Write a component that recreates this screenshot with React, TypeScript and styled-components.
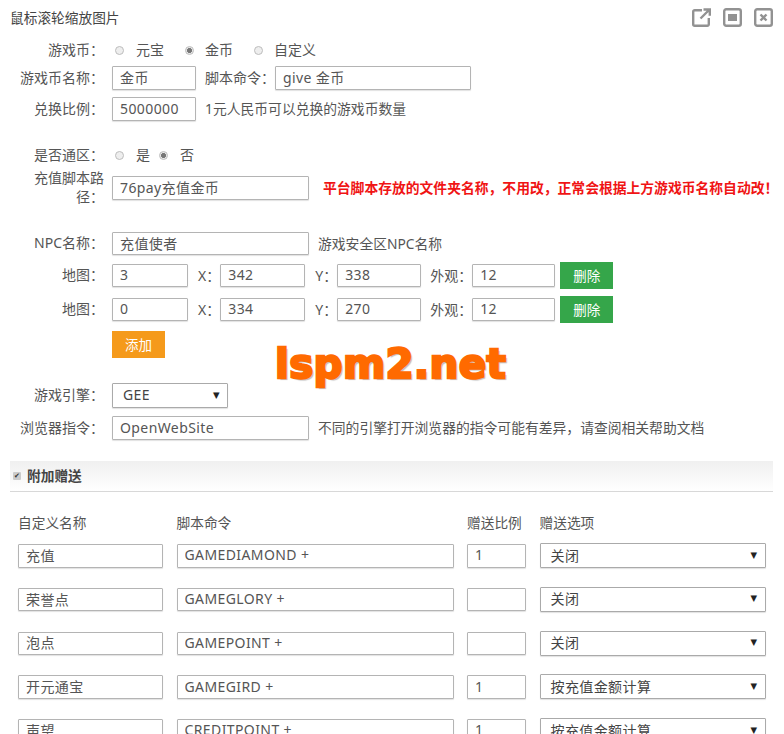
import React from "react";
import styled, { createGlobalStyle, css } from "styled-components";

const Global = createGlobalStyle`
  html, body { margin: 0; padding: 0; background: #fff; height: 734px; overflow: hidden; }
  body { font-family: "Noto Sans", "Noto Sans CJK SC", sans-serif; font-size: 14px; color: #555; }
`;
const Page = styled.div`position: relative; width: 784px; height: 734px; overflow: hidden;`;
const TitleBar = styled.header`display: flex; justify-content: space-between; height: 36px; padding: 8px 11px 0 10px; box-sizing: border-box;`;
const Title = styled.h1`margin: 0; font-size: 13.7px; font-weight: 400; line-height: 20px; color: #444;`;
const Actions = styled.div`display: flex; gap: 12px;`;
const Form = styled.div`display: flex; flex-direction: column;`;
const Row = styled.div<{ $top: number; $h?: number }>`
  display: flex; align-items: center; margin-top: ${p => p.$top}px; height: ${p => p.$h ?? 24}px;
`;
const Label = styled.label`
  width: 84px; margin: 0 8px 0 20px; padding-bottom: 2px; flex: none; text-align: right; line-height: 19px; color: #555;
`;
const InlineLabel = styled.span<{ $ml: number }>`margin-left: ${p => p.$ml}px; padding-bottom: 2px; flex: none; color: #555;`;
const Input = styled.input<{ $w: number }>`
  width: ${p => p.$w}px; height: 100%; box-sizing: border-box; flex: none; margin: 0;
  padding: 0 7px 2px; border: 1px solid #b4b4b4; border-radius: 1px; box-shadow: 0 1px 1px #e2e2e2;
  font: 14px "Noto Sans", "Noto Sans CJK SC", sans-serif; letter-spacing: .4px; color: #555; outline: none; background: #fff;
`;
const RadioGroup = styled.div`display: flex; align-items: center;`;
const RadioDot = styled.span<{ $on?: boolean; $ml: number }>`
  width: 9px; height: 9px; margin-left: ${p => p.$ml}px; border-radius: 50%; box-sizing: border-box; flex: none;
  border: 1px solid #bdbdbd; background: ${p => (p.$on ? "radial-gradient(circle, #777 0 2.2px, #e8e8e8 2.8px)" : "#eee")};
`;
const RadioText = styled.span<{ $ml: number }>`margin-left: ${p => p.$ml}px; padding-bottom: 2px; color: #555;`;
const Hint = styled.span<{ $ml: number }>`margin-left: ${p => p.$ml}px; padding-bottom: 2px; font-size: 13.8px; color: #555; white-space: nowrap;`;
const Warn = styled.span`margin-left: 14px; padding-bottom: 2px; font-size: 13.8px; font-weight: 700; color: #f01414; white-space: nowrap;`;
const Btn = styled.span<{ $bg: string }>`
  display: inline-flex; align-items: center; justify-content: center; width: 53px; height: 27px; flex: none;
  box-sizing: border-box; padding-bottom: 2px;
  background: ${p => p.$bg}; color: #fff; font-size: 13.5px;
`;
const DeleteBtn = styled(Btn)`margin-left: 5px;`;
const AddBtn = styled(Btn)`margin-left: 112px;`;
const SelectBox = styled.div<{ $w: number }>`
  width: ${p => p.$w}px; height: 25px; box-sizing: border-box; display: flex; align-items: center; justify-content: space-between;
  padding: 0 7px 2px 10px; border: 1px solid #aaa; border-radius: 1px; box-shadow: 0 1px 1px #e2e2e2; background: #fff;
  color: #444; letter-spacing: .4px; flex: none;
`;
const Caret = styled.span`font-size: 8.5px; color: #222; font-family: "DejaVu Sans", sans-serif;`;
const Section = styled.div`
  display: flex; align-items: center; margin: 21px 11px 0 10px; height: 31px; box-sizing: border-box; padding-left: 3px;
  background: linear-gradient(#f0f0f0, #fff); border-bottom: 1px solid #d8d8d8;
`;
const Check = styled.span`
  width: 8px; height: 8px; background: #ccc; border-radius: 1px; color: #333; font-size: 7px; line-height: 8px; text-align: center;
  font-family: "DejaVu Sans", sans-serif;
`;
const SectionTitle = styled.b`margin-left: 6px; padding-bottom: 3px; font-size: 13.7px; color: #444;`;
const columns = css`
  display: grid; grid-template-columns: 145px 277px 59px 226px; column-gap: 13.5px; margin-left: 18px;
`;
const TableHead = styled.div`${columns} margin-top: 20px; height: 22px; line-height: 21px;`;
const Table = styled.div`${columns} margin-top: 10px; row-gap: 20.1px; grid-auto-rows: 23.7px;`;
const TableSelect = styled(SelectBox)`margin-top: -1px;`;
const Head = styled.div`font-size: 13.7px; color: #555; white-space: nowrap;`;
const Watermark = styled.div`
  position: absolute; left: 275px; top: 338px; font: 700 40.5px/52px "DejaVu Sans", sans-serif; color: #ff6a00; white-space: nowrap;
  -webkit-text-stroke: 2.4px #ff6a00; text-shadow: 2px 2px 1px #bdbdbd; letter-spacing: .3px;
`;
const Ico = styled.svg`width: 19px; height: 19px; fill: none; stroke: #929292; stroke-width: 2.4;`;

const M = ({ x, y, a }: { x: string; y: string; a: string }) => (
  <Row $top={0} $h={23}>
    <Label>地图：</Label>
    <Input $w={76} value={a} readOnly />
    <InlineLabel $ml={10}>X：</InlineLabel>
    <Input $w={85} value={x} readOnly />
    <InlineLabel $ml={10}>Y：</InlineLabel>
    <Input $w={84} value={y} readOnly />
    <InlineLabel $ml={9}>外观：</InlineLabel>
    <Input $w={83} value="12" readOnly />
    <DeleteBtn $bg="#35a64a">删除</DeleteBtn>
  </Row>
);
const MapRows = styled.div`display: flex; flex-direction: column; gap: 11px; margin-top: 9px;`;

const rows: [string, string, string, string][] = [
  ["充值", "GAMEDIAMOND +", "1", "关闭"],
  ["荣誉点", "GAMEGLORY +", "", "关闭"],
  ["泡点", "GAMEPOINT +", "", "关闭"],
  ["开元通宝", "GAMEGIRD +", "1", "按充值金额计算"],
  ["声望", "CREDITPOINT +", "1", "按充值金额计算"],
];

export default function App() {
  return (
    <Page>
      <Global />
      <TitleBar>
        <Title>鼠标滚轮缩放图片</Title>
        <Actions>
          <Ico viewBox="0 0 19 19"><path d="M10 2.2H2.7a1.5 1.5 0 0 0-1.5 1.5v12.6a1.5 1.5 0 0 0 1.5 1.5h12.6a1.5 1.5 0 0 0 1.5-1.5V10" /><path d="M8.5 10.5 17 2M11.5 1.5h6.3v6.3" /></Ico>
          <Ico viewBox="0 0 19 19"><rect x="1.2" y="1.2" width="16.6" height="16.6" rx="2" /><rect x="5" y="6" width="9" height="7" fill="#929292" stroke="none" /></Ico>
          <Ico viewBox="0 0 19 19"><rect x="1.2" y="1.2" width="16.6" height="16.6" rx="2" /><path d="M6.5 6.5l6 6M12.5 6.5l-6 6" /></Ico>
        </Actions>
      </TitleBar>
      <Form>
        <Row $top={2}>
          <Label>游戏币：</Label>
          <RadioGroup>
            <RadioDot $ml={3} /><RadioText $ml={12}>元宝</RadioText>
            <RadioDot $ml={21} $on /><RadioText $ml={11}>金币</RadioText>
            <RadioDot $ml={21} /><RadioText $ml={11}>自定义</RadioText>
          </RadioGroup>
        </Row>
        <Row $top={4}>
          <Label>游戏币名称：</Label>
          <Input $w={84} value="金币" readOnly />
          <InlineLabel $ml={9}>脚本命令：</InlineLabel>
          <Input $w={196} value="give 金币" readOnly />
        </Row>
        <Row $top={7}>
          <Label>兑换比例：</Label>
          <Input $w={84} value="5000000" readOnly />
          <Hint $ml={9}>1元人民币可以兑换的游戏币数量</Hint>
        </Row>
        <Row $top={22}>
          <Label>是否通区：</Label>
          <RadioGroup>
            <RadioDot $ml={3} /><RadioText $ml={12}>是</RadioText>
            <RadioDot $ml={9} $on /><RadioText $ml={12}>否</RadioText>
          </RadioGroup>
        </Row>
        <Row $top={9}>
          <Label>充值脚本路径：</Label>
          <Input $w={197} value="76pay充值金币" readOnly />
          <Warn>平台脚本存放的文件夹名称，不用改，正常会根据上方游戏币名称自动改！</Warn>
        </Row>
        <Row $top={32} $h={23}>
          <Label>NPC名称：</Label>
          <Input $w={197} value="充值使者" readOnly />
          <Hint $ml={9}>游戏安全区NPC名称</Hint>
        </Row>
        <MapRows>
          <M a="3" x="342" y="338" />
          <M a="0" x="334" y="270" />
        </MapRows>
        <Row $top={10} $h={27}><AddBtn $bg="#f59a1b">添加</AddBtn></Row>
        <Row $top={25} $h={25}>
          <Label>游戏引擎：</Label>
          <SelectBox $w={116}>GEE<Caret>▼</Caret></SelectBox>
        </Row>
        <Row $top={8}>
          <Label>浏览器指令：</Label>
          <Input $w={197} value="OpenWebSite" readOnly />
          <Hint $ml={9}>不同的引擎打开浏览器的指令可能有差异，请查阅相关帮助文档</Hint>
        </Row>
        <Section><Check>✔</Check><SectionTitle>附加赠送</SectionTitle></Section>
        <TableHead>
          <Head>自定义名称</Head><Head>脚本命令</Head><Head>赠送比例</Head><Head>赠送选项</Head>
        </TableHead>
        <Table>
          {rows.map(r => (
            <React.Fragment key={r[0]}>
              <Input $w={145} value={r[0]} readOnly />
              <Input $w={277} value={r[1]} readOnly />
              <Input $w={59} value={r[2]} readOnly />
              <TableSelect $w={226}>{r[3]}<Caret>▼</Caret></TableSelect>
            </React.Fragment>
          ))}
        </Table>
      </Form>
      <Watermark>lspm2.net</Watermark>
    </Page>
  );
}
